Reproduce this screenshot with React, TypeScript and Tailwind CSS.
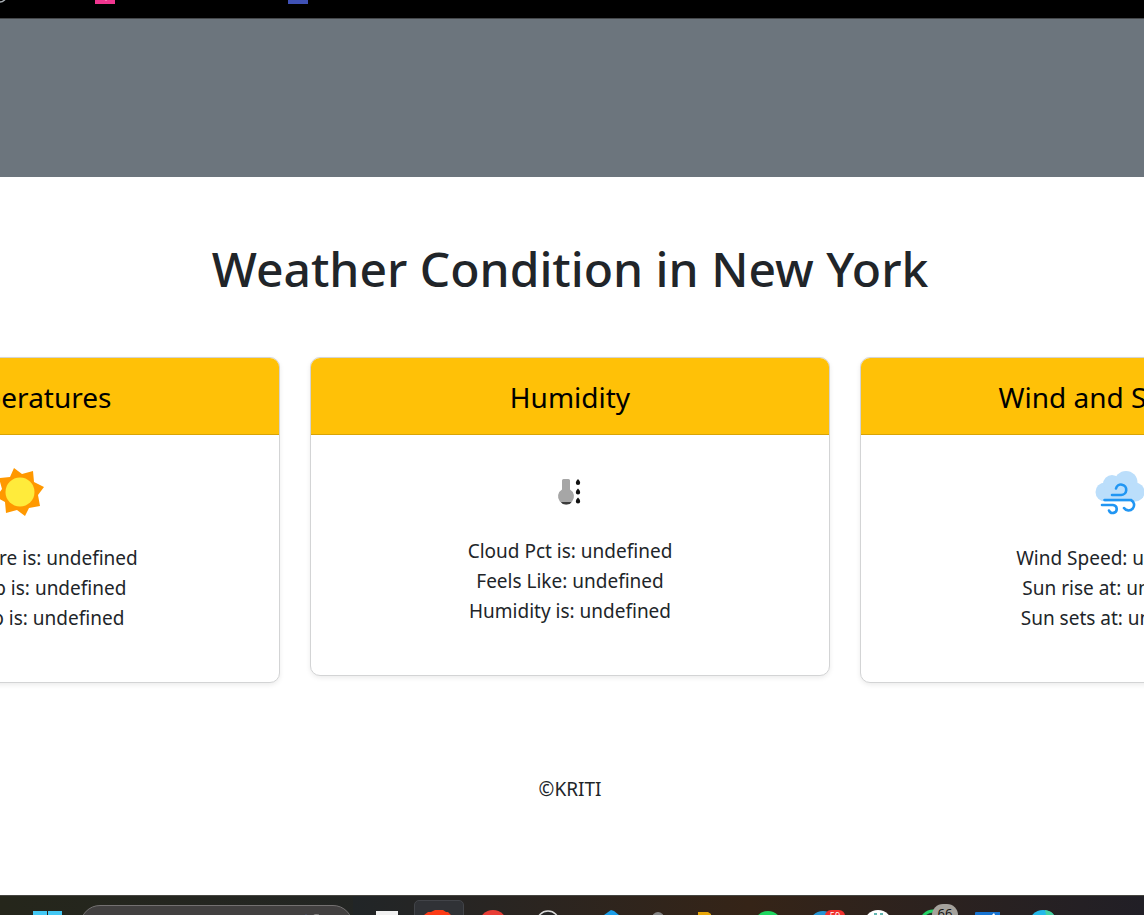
import type { ReactNode } from "react";

function SunIcon() {
  return (
    <svg viewBox="0 0 50 50" className="size-[50px]" aria-hidden="true">
      <polygon
        fill="#ff9800"
        points="19,1 27,7 38,4 39,15 49,20 43,28 45,39 34,41 30,49 22,43 11,46 10,35 1,30 7,22 4,11 15,10"
      />
      <circle cx="25" cy="25" r="14.5" fill="#ffeb3b" />
    </svg>
  );
}

function HumidityIcon() {
  return (
    <svg viewBox="0 0 36 36" className="size-[36px]" aria-hidden="true">
      <path
        fill="#a6a6a6"
        d="M10 6.500Q10 5 11.500 5h5Q18 5 18 6.500V15.500a8 8 0 1 1-8 0z"
      />
      <path fill="#3c3c3c" d="M9 28h10.500q-1 2.500-5.200 2.500T9 28z" />
      <path
        fill="#111"
        d="M26 5q2.200 2 2.200 3.700a2.200 2.200 0 0 1-4.400 0q0-1.700 2.200-3.700zM26 14.500q2.200 2 2.200 3.700a2.200 2.200 0 0 1-4.400 0q0-1.700 2.200-3.700zM26 23.500q2.200 2 2.200 3.700a2.200 2.200 0 0 1-4.400 0q0-1.700 2.200-3.700z"
      />
    </svg>
  );
}

function WindIcon() {
  return (
    <svg viewBox="0 0 50 50" className="size-[50px]" aria-hidden="true">
      <g fill="#bbdefb">
        <circle cx="10" cy="25" r="9.500" />
        <circle cx="17" cy="17" r="9" />
        <circle cx="31" cy="15.500" r="11.500" />
        <circle cx="40" cy="25" r="9.500" />
        <path d="M10 20h30v14.500H10z" />
      </g>
      <g fill="none" stroke="#2196f3" strokeWidth="2.600" strokeLinecap="round">
        <path d="M17 28h9a5.200 5.200 0 1 0-5-6.500" />
        <path d="M9.500 33H36a5.500 5.500 0 1 1-7 8" />
        <path d="M7 38h11a4 4 0 1 1-4 5.500" />
      </g>
    </svg>
  );
}

type CardProps = { title: string; icon: ReactNode; lines: string[] };

function WeatherCard({ title, icon, lines }: CardProps) {
  return (
    <section className="w-[520px] shrink-0 rounded-[10px] border border-[#d3d4d5] bg-white text-center shadow-[0_2px_5px_rgba(0,0,0,0.08)]">
      <h2 className="rounded-t-[9px] border-b border-[#d9a406] bg-[#ffc107] pt-[21px] pb-[19px] text-[28px] leading-9 text-black">
        {title}
      </h2>
      <div className="px-5 pt-8 pb-[49px]">
        <div className="mb-[26px] flex justify-center">{icon}</div>
        {lines.map((line) => (
          <p key={line} className="text-[19px] leading-[30px]">
            {line}
          </p>
        ))}
      </div>
    </section>
  );
}

const cards: CardProps[] = [
  {
    title: "Temperatures",
    icon: <SunIcon />,
    lines: ["Temperature is: undefined", "Max Temp is: undefined", "Min Temp is: undefined"],
  },
  {
    title: "Humidity",
    icon: (
      <div className="pt-[7px]">
        <HumidityIcon />
      </div>
    ),
    lines: ["Cloud Pct is: undefined", "Feels Like: undefined", "Humidity is: undefined"],
  },
  {
    title: "Wind and Sun Info",
    icon: <WindIcon />,
    lines: ["Wind Speed: undefined", "Sun rise at: undefined", "Sun sets at: undefined"],
  },
];

const apps: { name: string; active?: boolean; art: ReactNode }[] = [
  { name: "Task view", art: <rect x="21" y="16" width="22" height="4" fill="#f1f1f1" /> },
  {
    name: "Brave",
    active: true,
    art: <path fill="#fb3b16" d="M14 20l4-3h3l4-2h8l3 2h2l3 3z" />,
  },
  { name: "Recorder", art: <circle cx="28" cy="29" r="14" fill="#e83d35" /> },
  {
    name: "Assistant",
    art: <circle cx="28" cy="27" r="11" fill="#252525" stroke="#ddd" strokeWidth="1.500" />,
  },
  { name: "Editor", art: <path fill="#1b9de8" d="M29 20l7-5 3 1 5 4z" /> },
  { name: "Settings", art: <circle cx="28" cy="23" r="6" fill="#858585" /> },
  { name: "Files", art: <path fill="#e9a709" d="M13 20v-3h10l3 2v1z" /> },
  { name: "Spotify", art: <circle cx="28" cy="30" r="14" fill="#1ed760" /> },
  {
    name: "Telegram",
    art: (
      <>
        <circle cx="28" cy="30" r="14" fill="#2695d5" />
        <rect x="30" y="15" width="20" height="14" rx="6" fill="#f1302d" />
        <text x="40" y="24" fontSize="9" fill="#fff" textAnchor="middle">59</text>
      </>
    ),
  },
  {
    name: "Slack",
    art: (
      <>
        <circle cx="28" cy="29" r="14" fill="#fff" />
        <path fill="#62b7b2" d="M24 18h3v2h-3zM30 18h3v2h-3z" />
      </>
    ),
  },
  {
    name: "WhatsApp",
    art: (
      <>
        <circle cx="28" cy="28" r="12" fill="#24342a" stroke="#25d366" strokeWidth="3" />
        <rect x="27" y="9" width="26" height="22" rx="11" fill="#a5a29c" />
        <text x="40" y="23" fontSize="13" fill="#161616" textAnchor="middle">66</text>
      </>
    ),
  },
  {
    name: "Mail",
    art: (
      <>
        <path fill="#1673d1" d="M15 20v-2q0-1 1-1h24v3z" />
        <path fill="#fff" d="M32 20l2-2 1 2z" />
      </>
    ),
  },
  {
    name: "Edge",
    art: (
      <>
        <circle cx="28" cy="29" r="14" fill="#24b9ea" />
        <path fill="#45d2a2" d="M30 15q7 1 9 5h-8z" />
      </>
    ),
  },
];

function Taskbar() {
  return (
    <nav
      aria-label="Taskbar"
      className="flex h-5 shrink-0 overflow-hidden border-t border-[#454540] bg-linear-to-r from-[#25261b] via-[#222528] to-[#211f26]"
    >
      <button aria-label="Start" className="w-20 shrink-0">
        <svg viewBox="0 0 80 19" className="h-[19px] w-20">
          <path fill="#43c8f4" d="M33 15h14v4H33zM48 15h14v4H48z" />
        </svg>
      </button>
      <button
        aria-label="Search"
        className="mt-[9px] h-10 w-[273px] shrink-0 rounded-full border border-[#747171] bg-[#424040]"
      >
        <svg viewBox="0 0 271 38" className="h-[38px] w-[271px]">
          <path d="M225 8v6" stroke="#495577" strokeWidth="1" />
          <path d="M231 10q3-2 7-1" stroke="#aaa" strokeWidth="1" fill="none" />
        </svg>
      </button>
      <div className="flex min-w-0 flex-1 bg-linear-to-r from-[#212527] via-[#352417] to-[#211f26] pl-[2px]">
        {apps.map((app) => (
          <button key={app.name} aria-label={app.name} className="relative w-[55px] shrink-0">
            {app.active && (
              <span className="absolute top-1 left-1 h-10 w-[50px] rounded-[5px] border border-[#424449] bg-[#303236]" />
            )}
            <svg viewBox="0 1 55 19" className="relative h-[19px] w-[55px] font-['Noto_Sans']">
              {app.art}
            </svg>
          </button>
        ))}
      </div>
    </nav>
  );
}

export default function App() {
  return (
    <div className="flex min-h-screen flex-col overflow-hidden bg-white font-['Noto_Sans',sans-serif] text-[#212529]">
      <header className="h-[19px] shrink-0 border-b border-[#45484b] bg-black">
        <svg viewBox="0 0 330 18" className="h-[18px] w-[330px]" aria-hidden="true">
          <circle cx="0" cy="-4" r="6" fill="none" stroke="#a9afb5" strokeWidth="1.500" />
          <path fill="#f0368f" d="M95 0h20v4H95z" />
          <path fill="#fb75b2" d="M105 0h2v1h-2z" />
          <path fill="#3f51b5" d="M288 0h20v4h-20z" />
        </svg>
      </header>
      <div className="h-[158px] shrink-0 bg-[#6c757d]" />
      <main className="flex-1 pr-1">
        <h1 className="pt-[62px] text-center text-[48px] leading-[60px] font-medium">
          Weather Condition in New York
        </h1>
        <div className="mt-[58px] flex items-start justify-center gap-[30px]">
          {cards.map((card) => (
            <WeatherCard key={card.title} {...card} />
          ))}
        </div>
        <footer className="pt-[91px] text-center text-[19px] leading-[30px]">©KRITI</footer>
      </main>
      <Taskbar />
    </div>
  );
}
